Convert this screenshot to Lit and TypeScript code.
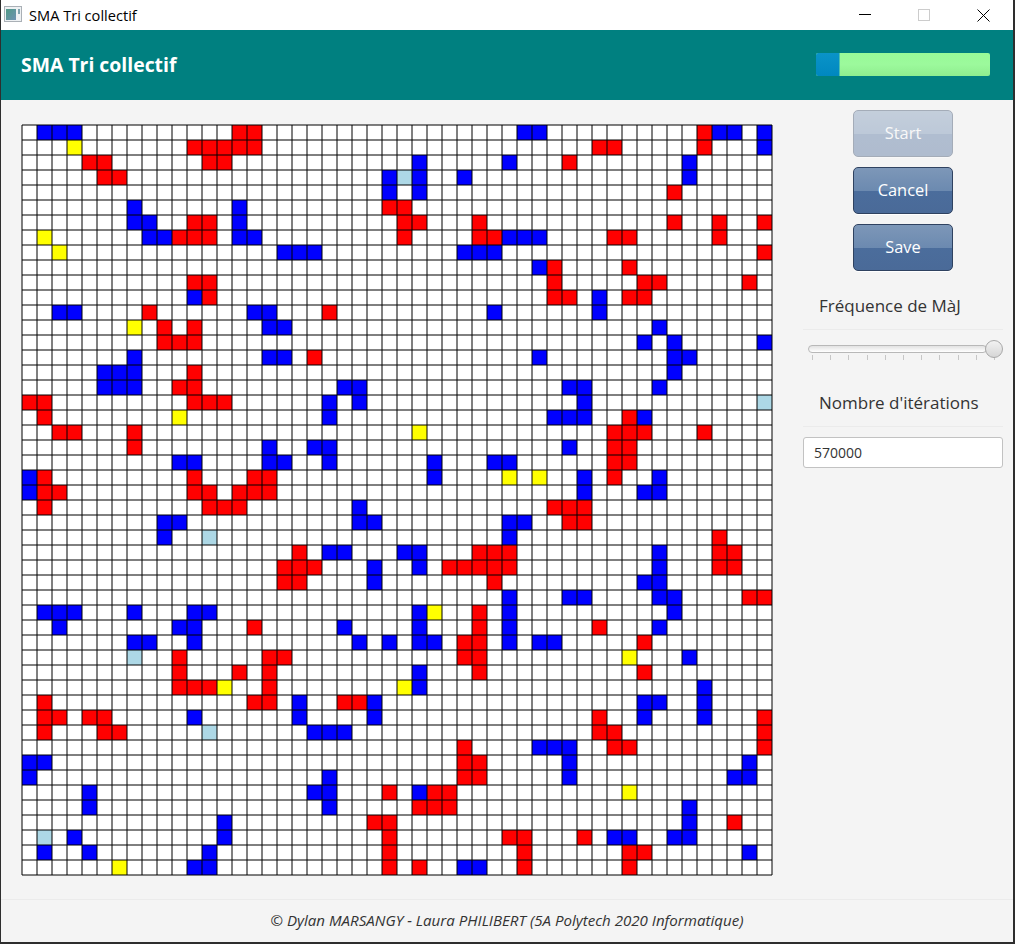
import { LitElement, css, html, svg } from "lit";
import { customElement } from "lit/decorators.js";

const CELL = 15;
const SIZE = 50;
const COLORS: Record<string, string> = { r: "#ff0000", b: "#0000ff", y: "#ffff00", l: "#add8e6" };

// one line per row: colour letter + column
const ROWS = [
  "b1 b2 b3 r14 r15 b33 b34 r45 b46 b47 b49",
  "y3 r11 r12 r13 r14 r15 r38 r39 r45 b49",
  "r4 r5 r12 r13 b26 b32 r36 b44",
  "r5 r6 b24 l25 b26 b29 b44",
  "b24 b26 r43",
  "b7 b14 r24 r25",
  "b7 b8 r11 r12 b14 r25 r26 r30 r43 r46 r49",
  "y1 b8 b9 r10 r11 r12 b14 b15 r25 r30 r31 b32 b33 b34 r39 r40 r46",
  "y2 b17 b18 b19 b29 b30 b31 r49",
  "b34 r35 r40",
  "r11 r12 r35 r41 r42 r48",
  "b11 r12 r35 r36 b38 r40 r41",
  "b2 b3 r8 b15 b16 r20 b31 b38",
  "y7 r9 r11 b16 b17 b42",
  "r9 r10 r11 b41 b43 b49",
  "b7 b16 b17 r19 b34 b43 b44",
  "b5 b6 b7 r11 b43",
  "b5 b6 b7 r10 r11 b21 b22 b36 b37 b42",
  "r0 r1 r11 r12 r13 b20 b22 b37 l49",
  "r1 y10 b20 b35 b36 b37 r40 b41",
  "r2 r3 r7 y26 r39 r40 r41 r45",
  "r7 b16 b19 b20 b36 r39 r40",
  "b10 b11 b16 b17 b20 b27 b31 b32 r39 r40",
  "b0 r1 r11 r15 r16 b27 y32 y34 b37 r39 b42",
  "b0 r1 r2 r11 r12 r14 r15 r16 b37 b41 b42",
  "r1 r12 r13 r14 b22 r35 r36 r37",
  "b9 b10 b22 b23 b32 b33 r36 r37",
  "b9 l12 b32 r46",
  "r18 b20 b21 b25 b26 r30 r31 r32 b42 r46 r47",
  "r17 r18 r19 b23 b26 r28 r29 r30 r31 r32 b42 r46 r47",
  "r17 r18 b23 r31 b41 b42",
  "b32 b36 b37 b42 b43 r48 r49",
  "b1 b2 b3 b7 b11 b12 b26 y27 r30 b32 b43",
  "b2 b10 b11 r15 b21 b26 r30 b32 r38 b42",
  "b7 b8 b11 b22 b24 b26 b27 r29 r30 b32 b34 b35 r41",
  "l7 r10 r16 r17 r29 r30 y40 b44",
  "r10 r14 r16 b26 r30 r41",
  "r10 r11 r12 y13 r16 y25 b26 b45",
  "r1 r15 r16 b18 r21 r22 b23 b41 b42 b45",
  "r1 r2 r4 r5 b11 b18 b23 r38 b41 b45 r49",
  "r1 r5 r6 l12 b19 b20 b21 r38 r39 r49",
  "r29 b34 b35 b36 r39 r40 r49",
  "b0 b1 r29 r30 b36 b48",
  "b0 b20 r29 r30 b36 b47 b48",
  "b4 b19 b20 r24 b26 r27 r28 y40",
  "b4 b20 r26 r27 r28 b44",
  "b13 r23 r24 b44 r47",
  "l1 b3 b13 r24 r32 r33 r37 b39 b40 b43 b44",
  "b1 b4 b12 r24 r33 r40 r41 b48",
  "y6 b11 b12 r24 r26 b29 b30 r33 r40",
];

const TICKS = Array.from({ length: 11 });

function gridLines() {
  const end = SIZE * CELL + 1;
  let d = "";
  for (let i = 0; i <= SIZE; i++) {
    const p = i * CELL + 1;
    d += `M${p} 1V${end}M1 ${p}H${end}`;
  }
  return d;
}

@customElement("app-root")
export class AppRoot extends LitElement {
  static styles = css`
    :host {
      display: block;
      width: 1015px;
      height: 944px;
      background: #2e2e2e;
      font-family: "Open Sans", "Noto Sans", sans-serif;
      color: #333;
      overflow: hidden;
    }

    .window {
      display: flex;
      flex-direction: column;
      width: 1012px;
      height: 942px;
      margin-left: 1px;
      background: #f4f4f4;
    }

    .titlebar {
      display: flex;
      align-items: center;
      height: 30px;
      background: #fff;
      color: #000;
      font-size: 14.6px;
    }

    .app-icon {
      flex: none;
      margin: -2px 7px 0 3px;
    }

    .win-title {
      flex: 1;
    }

    .win-btn {
      display: flex;
      align-items: center;
      justify-content: center;
      width: 58px;
      height: 30px;
    }

    .win-btn.max {
      width: 59px;
    }

    .win-btn.close {
      width: 60px;
    }

    .header {
      display: flex;
      align-items: center;
      justify-content: space-between;
      height: 70px;
      padding: 0 23px 2px 20px;
      box-sizing: border-box;
      background: #008080;
      color: #fff;
      font-size: 19.4px;
      font-weight: 700;
    }

    .progress {
      width: 174px;
      height: 23px;
      border-radius: 2px;
      background: linear-gradient(#98fb98, #9cf99c 50%, #8fee8f);
      overflow: hidden;
    }

    .progress-bar {
      height: 100%;
      background: linear-gradient(#0a93c8, #0088c0);
      border-right: 1px solid #4cc0b0;
    }

    .main {
      flex: 1;
      display: flex;
      align-items: flex-start;
      padding-left: 20px;
    }

    .grid {
      display: block;
      flex: none;
      margin-top: 24px;
    }

    .side {
      display: flex;
      flex-direction: column;
      align-items: center;
      width: 200px;
      margin-left: 30px;
      padding-top: 10px;
    }

    button {
      width: 100px;
      height: 47px;
      margin-bottom: 10px;
      padding: 0 0 2px;
      border: 1px solid #2f4260;
      border-radius: 5px;
      background: linear-gradient(#7d97b8, #6c8ab0 50%, #4b6d9c 51%, #4a6a98);
      box-shadow: 0 1px 0 #fff;
      color: #fff;
      font: 16.4px "Open Sans", "Noto Sans", sans-serif;
    }

    button[disabled] {
      opacity: 0.4;
    }

    .caption {
      align-self: stretch;
      padding-left: 16px;
      border-bottom: 1px solid #ebebeb;
      font-size: 17px;
    }

    .first {
      height: 48px;
      line-height: 50px;
    }

    .second {
      height: 46px;
      line-height: 46px;
    }

    .slider {
      position: relative;
      align-self: stretch;
      height: 30px;
      margin: 10px 0;
    }

    .track {
      height: 6px;
      margin: 5px 16px 0 5px;
      border: 1px solid #b8b8b8;
      border-radius: 4px;
      background: linear-gradient(#e2e2e2, #fff);
    }

    .ticks {
      display: flex;
      justify-content: space-between;
      margin: 2px 8px 0 9px;
    }

    .ticks i {
      width: 1px;
      height: 5px;
      background: #c6c6c6;
    }

    .thumb {
      position: absolute;
      top: 0;
      right: 0;
      width: 16px;
      height: 16px;
      border: 1px solid #a8a8a8;
      border-radius: 50%;
      background: linear-gradient(#f2f2f2, #d6d6d6);
    }

    input {
      box-sizing: border-box;
      align-self: stretch;
      height: 31px;
      margin-top: 10px;
      padding: 0 10px;
      border: 1px solid #c2c2c2;
      border-radius: 3px;
      background: #fff;
      color: #333;
      font: 14px "Open Sans", "Noto Sans", sans-serif;
    }

    .footer {
      display: flex;
      align-items: center;
      justify-content: center;
      height: 40px;
      padding-bottom: 2px;
      border-top: 1px solid #ebebeb;
      font-size: 15.1px;
      font-style: italic;
    }
  `;

  private renderGrid() {
    const dim = SIZE * CELL + 2;
    return html`
      <svg class="grid" width=${dim} height=${dim} viewBox="0 0 ${dim} ${dim}">
        <rect x="1" y="1" width=${SIZE * CELL} height=${SIZE * CELL} fill="#fff"></rect>
        ${ROWS.map((row, r) =>
          row.split(" ").map(
            (c) => svg`<rect
              x=${+c.slice(1) * CELL + 1}
              y=${r * CELL + 1}
              width=${CELL}
              height=${CELL}
              fill=${COLORS[c[0]]}
            ></rect>`,
          ),
        )}
        <path d=${gridLines()} fill="none" stroke="#000" stroke-width="1"></path>
      </svg>
    `;
  }

  render() {
    return html`
      <div class="window">
        <div class="titlebar">
          <svg class="app-icon" width="18" height="16" viewBox="0 0 18 16">
            <defs>
              <linearGradient id="ic" x1="0" y1="0" x2="1" y2="1">
                <stop offset="0" stop-color="#4f9a86"></stop>
                <stop offset="1" stop-color="#6f93b4"></stop>
              </linearGradient>
            </defs>
            <rect x="0.5" y="0.5" width="17" height="15" fill="#eef1f3" stroke="#aab0b6"></rect>
            <rect x="2" y="3" width="10" height="11" fill="url(#ic)"></rect>
            <rect x="14" y="3" width="2" height="5" fill="#7fa3af"></rect>
          </svg>
          <span class="win-title">SMA Tri collectif</span>
          <div class="win-btn">
            <svg width="12" height="12" viewBox="0 0 12 12"><path d="M0 5.5H12" stroke="#000"></path></svg>
          </div>
          <div class="win-btn max">
            <svg width="12" height="12" viewBox="0 0 12 12"><rect x="0.5" y="0.5" width="11" height="11" fill="none" stroke="#ccc"></rect></svg>
          </div>
          <div class="win-btn close">
            <svg width="13" height="13" viewBox="0 0 13 13"><path d="M0.5 0.5L12.5 12.5M12.5 0.5L0.5 12.5" stroke="#000" fill="none"></path></svg>
          </div>
        </div>
        <div class="header">
          <span>SMA Tri collectif</span>
          <div class="progress"><div class="progress-bar" style="width: 23px"></div></div>
        </div>
        <div class="main">
          ${this.renderGrid()}
          <div class="side">
            <button disabled>Start</button>
            <button>Cancel</button>
            <button>Save</button>
            <div class="caption first">Fréquence de MàJ</div>
            <div class="slider">
              <div class="track"></div>
              <div class="ticks">${TICKS.map(() => html`<i></i>`)}</div>
              <div class="thumb"></div>
            </div>
            <div class="caption second">Nombre d'itérations</div>
            <input value="570000" />
          </div>
        </div>
        <div class="footer">© Dylan MARSANGY - Laura PHILIBERT (5A Polytech 2020 Informatique)</div>
      </div>
    `;
  }
}
